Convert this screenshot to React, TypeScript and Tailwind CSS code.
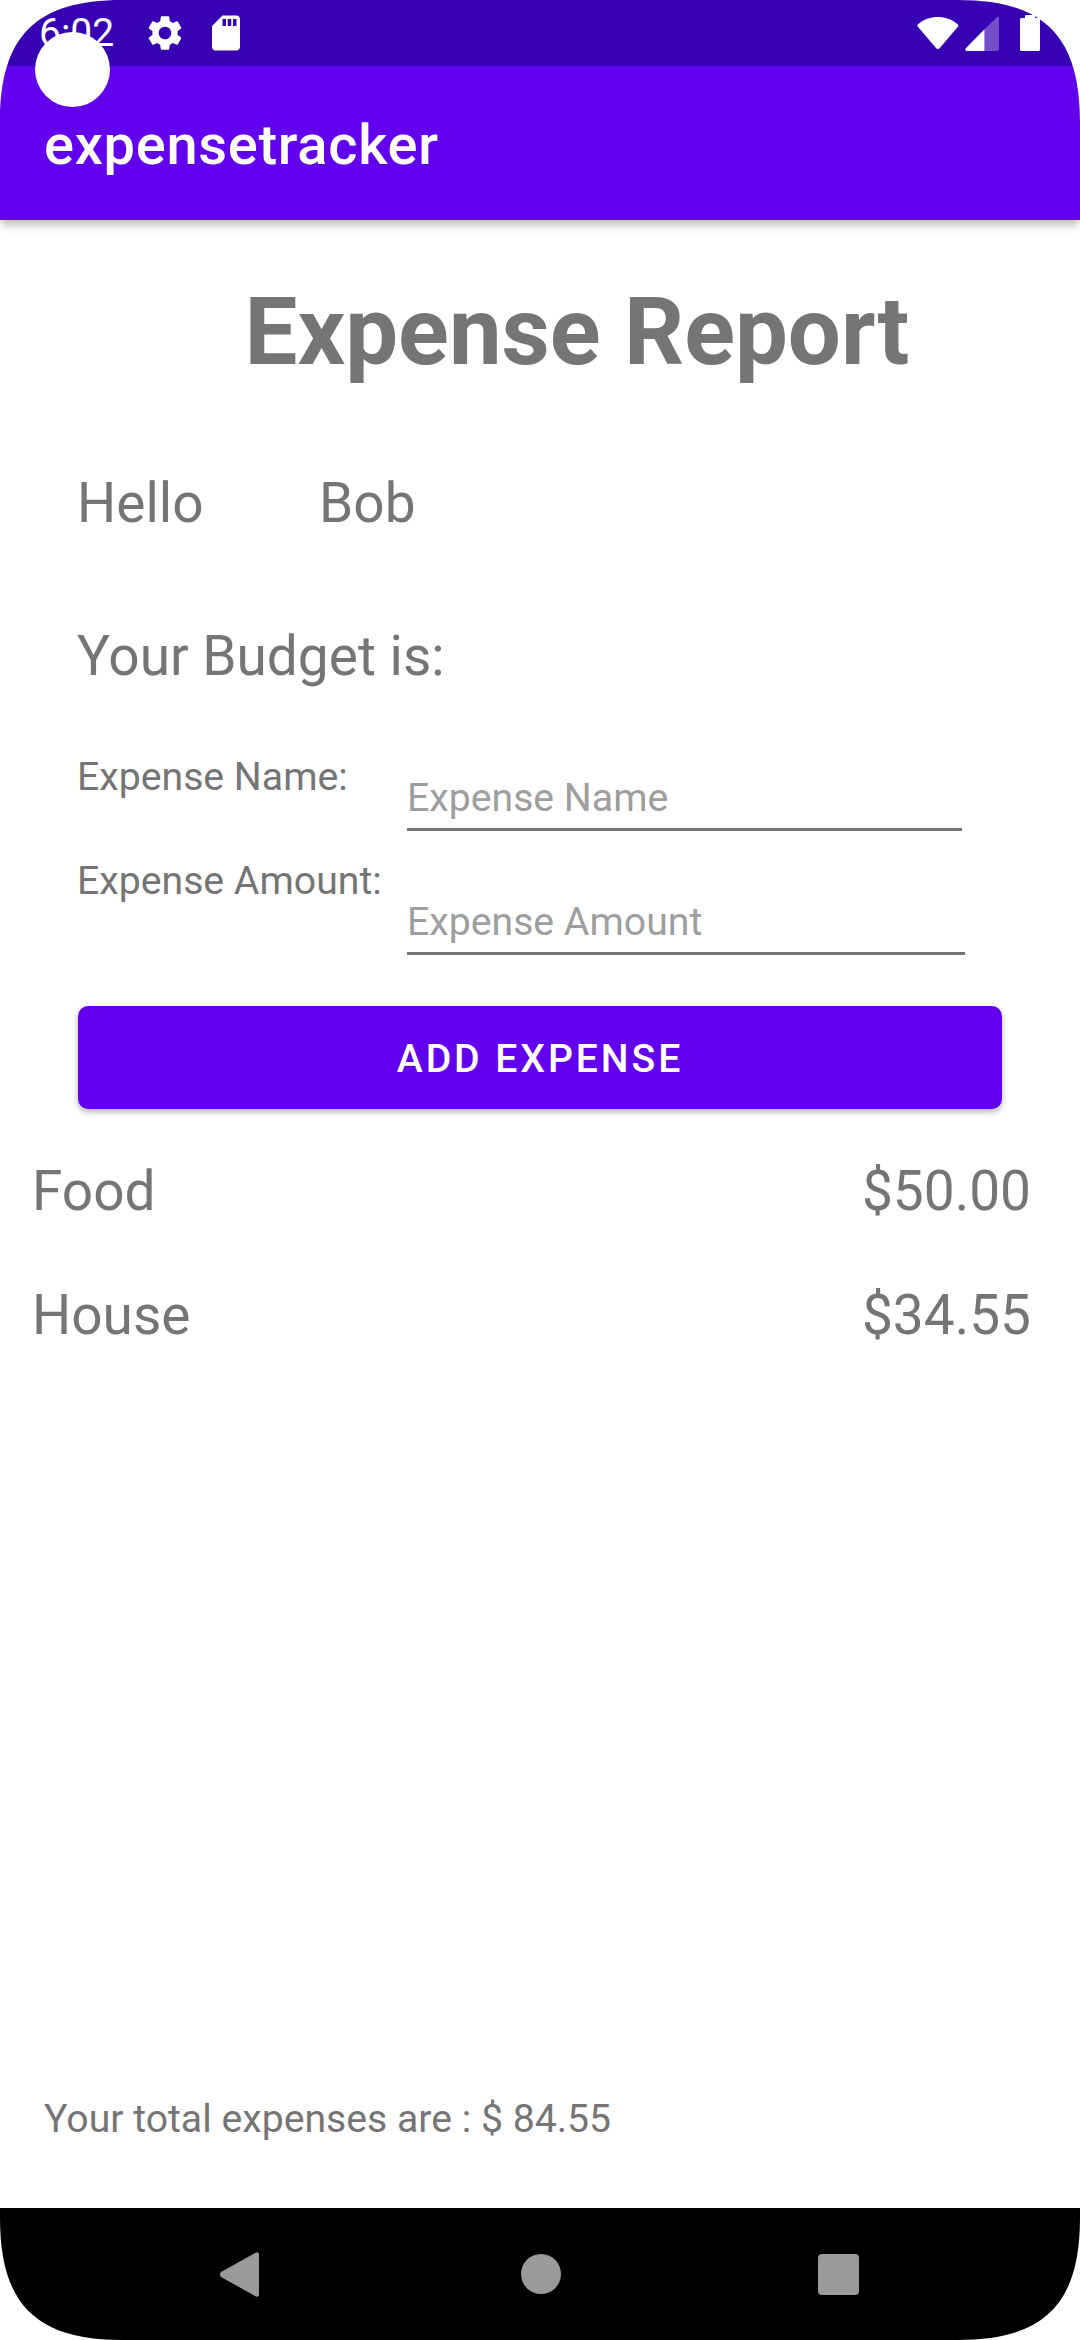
import { MdSettings, MdSdCard } from "react-icons/md";

const rf = "font-['Roboto','Liberation_Sans',sans-serif]";

function Wifi() {
  return (
    <svg width="42" height="34" viewBox="0 0 42 34" className="shrink-0">
      <path d="M1.2 8.2C6.5 3.500 13.400 1 20.800 1s14.300 2.500 19.800 7.200c.9.8 1 1.700.3 2.600L22.600 32.300c-.9 1-2.500 1-3.400 0L.9 10.800c-.7-.9-.6-1.800.3-2.600z" fill="#fff" />
    </svg>
  );
}

function Signal() {
  return (
    <svg width="34" height="35" viewBox="0 0 34 35" className="shrink-0">
      <path d="M19.500 13.200L32 1c.8-.7 2-.2 2 .9V33c0 1-.8 2-2 2H19.500z" fill="#fff" fillOpacity="0.3" />
      <path d="M19.500 13.200V35H2c-1.600 0-2.300-1.700-1.200-2.800z" fill="#fff" />
    </svg>
  );
}

function Battery() {
  return (
    <svg width="20" height="36" viewBox="0 0 20 36" className="shrink-0">
      <path d="M6 0h8c.6 0 1 .4 1 1v2h3.500c.8 0 1.500.7 1.500 1.500V34.500c0 .8-.7 1.500-1.500 1.500H1.500C.7 36 0 35.300 0 34.500V4.500C0 3.700.7 3 1.500 3H5V1c0-.6.4-1 1-1z" fill="#fff" />
    </svg>
  );
}

function Corner({ className }: { className: string }) {
  return (
    <svg width="124" height="124" viewBox="0 0 124 124" className={`absolute z-30 ${className}`}>
      <path d="M0 0H122C36 0 0 36 0 122Z" fill="#fff" />
    </svg>
  );
}

export default function App() {
  return (
    <div className={`${rf} w-[1080px] h-[2340px] bg-white flex flex-col relative overflow-hidden`}>
      <div className="relative z-10 shadow-[0_4px_10px_rgba(0,0,0,0.3)]">
        <div className="h-[66px] bg-[#3700B3] flex items-center text-white">
          <span className="ml-[39px] w-[76px] text-[39px] leading-none">6:02</span>
          <MdSettings className="ml-[29px] text-[42px] shrink-0" />
          <MdSdCard className="ml-[19px] text-[42px] shrink-0" />
          <div className="ml-auto flex items-center mr-[40px]">
            <Wifi />
            <div className="ml-[6px]"><Signal /></div>
            <div className="ml-[21px]"><Battery /></div>
          </div>
        </div>
        <div className="h-[154px] bg-[#6200EE] flex items-center pl-[44px] pt-[4px]">
          <span className="text-white text-[56px] tracking-[0.7px] font-medium leading-none">expensetracker</span>
        </div>
      </div>
      <div className="absolute left-[35px] top-[32px] w-[75px] h-[75px] rounded-full bg-white z-20" />

      <main className="flex-1 flex flex-col text-[#757575]">
        <h1 className="mt-[57px] h-[110px] flex items-center justify-center pl-[74px] text-[94px] font-bold leading-none">
          Expense Report
        </h1>
        <div className="mt-[84px] h-[64px] flex items-center pl-[77px] text-[55px] leading-none">
          <span className="w-[242px]">Hello</span>
          <span>Bob</span>
        </div>
        <div className="mt-[89px] h-[64px] flex items-center pl-[77px] text-[55px] leading-none">
          Your Budget is:
        </div>
        <div className="mt-[60px] flex pl-[77px]">
          <span className="w-[330px] h-[59px] flex items-center text-[39.2px] leading-none">Expense Name:</span>
          <input
            placeholder="Expense Name"
            className="w-[555px] h-[83px] pt-[20px] border-b-[3px] border-[#757575] text-[39.2px] placeholder:text-[#9e9e9e] outline-none"
          />
        </div>
        <div className="mt-[22px] flex pl-[77px]">
          <span className="w-[330px] h-[58px] flex items-center text-[39.2px] leading-none">Expense Amount:</span>
          <input
            placeholder="Expense Amount"
            className="w-[558px] h-[102px] pt-[38px] border-b-[3px] border-[#757575] text-[39.2px] placeholder:text-[#9e9e9e] outline-none"
          />
        </div>
        <button className="mt-[51px] ml-[78px] w-[924px] h-[103px] pt-[3px] rounded-[10px] bg-[#6200EE] text-white text-[39.2px] font-medium tracking-[2.9px] shadow-[0_3px_6px_rgba(0,0,0,0.3)]">
          ADD EXPENSE
        </button>
        <div className="mt-[50px] h-[64px] flex items-center justify-between pl-[32px] pr-[49px] text-[55px] leading-none">
          <span>Food</span>
          <span>$50.00</span>
        </div>
        <div className="mt-[60px] h-[64px] flex items-center justify-between pl-[32px] pr-[49px] text-[55px] leading-none">
          <span>House</span>
          <span>$34.55</span>
        </div>
        <div className="mt-auto mb-[66px] pl-[44px] h-[44px] flex items-center text-[39.2px] leading-none">
          Your total expenses are : $ 84.55
        </div>
      </main>

      <nav className="h-[132px] bg-black flex items-center pl-[220px] shrink-0">
        <svg width="39" height="45" viewBox="0 0 39 45" className="shrink-0">
          <path d="M1 20L35.500 .8C37 -.5 39 .5 39 2.500V42.500c0 2-2 3-3.500 1.700L1 25c-1.300-1.500-1.300-3.500 0-5z" fill="#9a9a9a" />
        </svg>
        <div className="ml-[262px] w-[40px] h-[40px] rounded-full bg-[#9a9a9a]" />
        <div className="ml-[257px] w-[41px] h-[41px] rounded-[4px] bg-[#9a9a9a]" />
      </nav>

      <Corner className="left-0 top-0" />
      <Corner className="right-0 top-0 -scale-x-100" />
      <Corner className="left-0 bottom-0 -scale-y-100" />
      <Corner className="right-0 bottom-0 -scale-100" />
    </div>
  );
}
